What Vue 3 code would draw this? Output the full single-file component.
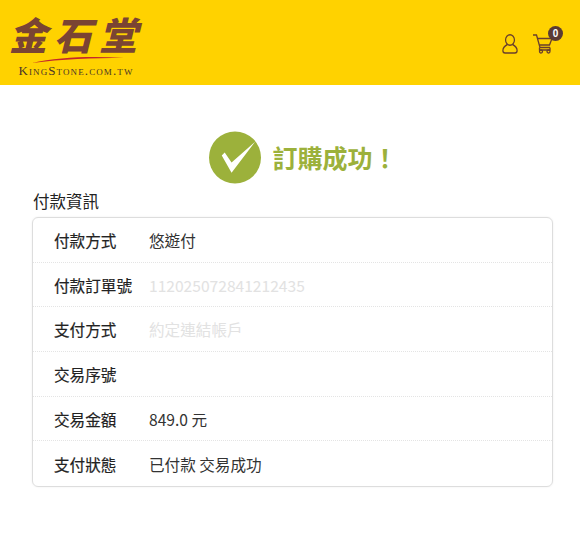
<template>
  <div class="page">
    <header class="topbar">
      <div class="logo">
        <div class="logo-name">金石堂</div>
        <svg class="swoosh" width="92" height="7" viewBox="0 0 92 7">
          <path d="M0 7C26 1 60 0 92 2C60 2 30 3 0 7Z" fill="#c4272b" />
        </svg>
        <div class="logo-url">KingStone.com.tw</div>
      </div>
      <div class="actions">
        <svg class="icon" width="16" height="20" viewBox="0 0 18 20" preserveAspectRatio="none" fill="none" stroke="#6a3f2c" stroke-width="1.4">
          <ellipse cx="9" cy="6" rx="5" ry="5.200" />
          <path d="M6 10.500C3 12 1 13.500 1 16.500C1 18 2 19 3.500 19H14.500C16 19 17 18 17 16.500C17 13.500 15 12 12 10.500" />
        </svg>
        <div class="cart">
          <svg width="20" height="20" viewBox="0 0 20 20" fill="none" stroke="#6a3f2c" stroke-width="1.3">
            <path d="M0 1H3.500L7 13.500H17" />
            <path d="M4.500 4.500H19L16.500 11H6.300" />
            <path d="M6.500 13.500V16H17V13.500" />
            <circle cx="8" cy="17.500" r="1.500" />
            <circle cx="15.500" cy="17.500" r="1.500" />
          </svg>
          <span class="badge">0</span>
        </div>
      </div>
    </header>

    <main class="content">
      <div class="success">
        <svg width="52" height="53" viewBox="0 0 53 53">
          <circle cx="26.500" cy="26.500" r="26.500" fill="#9cb13b" />
          <path d="M13 24.500L16 21.500L23 31.500L47 10.500L23 42Z" fill="#fff" />
        </svg>
        <h1>訂購成功！</h1>
      </div>

      <h2>付款資訊</h2>
      <div class="card">
        <div v-for="row in rows" :key="row.label" class="row">
          <span class="label">{{ row.label }}</span>
          <span class="value" :class="{ faint: row.faint }">{{ row.value }}</span>
        </div>
      </div>
    </main>
  </div>
</template>

<script setup>
const rows = [
  { label: '付款方式', value: '悠遊付' },
  { label: '付款訂單號', value: '112025072841212435', faint: true },
  { label: '支付方式', value: '約定連結帳戶', faint: true },
  { label: '交易序號', value: '' },
  { label: '交易金額', value: '849.0 元' },
  { label: '支付狀態', value: '已付款 交易成功' }
]
</script>

<style>
body {
  background: #fff;
}
</style>

<style scoped>
.page {
  width: 580px;
  height: 540px;
  overflow: hidden;
  font-family: "Noto Sans CJK TC", "Noto Sans", sans-serif;
  color: #333;
}

.topbar {
  height: 85px;
  background: #ffd200;
  display: flex;
  justify-content: space-between;
  align-items: center;
  padding: 0 27px 0 6px;
  box-sizing: border-box;
}

.logo {
  width: 134px;
  display: flex;
  flex-direction: column;
  align-items: center;
  margin-top: 5px;
}

.logo-name {
  font-size: 38px;
  line-height: 42px;
  font-weight: 900;
  font-style: italic;
  letter-spacing: 7px;
  margin-right: -7px;
  color: #7a4433;
  white-space: nowrap;
}

.swoosh {
  margin-top: 1px;
  margin-left: 10px;
}

.logo-url {
  font-family: "Liberation Serif", serif;
  font-variant: small-caps;
  font-size: 13px;
  line-height: 14px;
  letter-spacing: 1.1px;
  color: #4a3428;
  margin-top: 1px;
  margin-left: 6px;
  white-space: nowrap;
}

.actions {
  display: flex;
  align-items: center;
  gap: 15px;
  margin-top: 3px;
}

.icon {
  display: block;
}

.cart {
  position: relative;
  height: 20px;
}

.cart svg {
  display: block;
}

.badge {
  position: absolute;
  top: -8px;
  right: -10px;
  width: 15px;
  height: 15px;
  border-radius: 50%;
  background: #5a3b34;
  color: #fff;
  font: 700 10px/15px "Liberation Sans", sans-serif;
  text-align: center;
}

.content {
  padding: 46px 27px 0 32px;
}

.success {
  display: flex;
  justify-content: center;
  align-items: center;
  gap: 11px;
  padding-left: 22px;
}

.success h1 {
  margin: 0;
  font-size: 25px;
  line-height: 53px;
  font-weight: 700;
  color: #9cb13b;
}

h2 {
  margin: 6px 0 4px 1px;
  font-size: 16.500px;
  line-height: 23px;
  font-weight: 400;
  color: #222;
}

.card {
  border: 1px solid #ddd;
  border-radius: 6px;
  box-shadow: 0 0 2px rgba(0, 0, 0, 0.08);
}

.row {
  height: 44.700px;
  box-sizing: border-box;
  display: flex;
  align-items: center;
  padding-left: 21px;
  font-size: 15.600px;
  border-bottom: 1px dotted #e4e4e4;
}

.row:last-child {
  border-bottom: none;
}

.label {
  width: 95px;
  font-weight: 400;
  -webkit-text-stroke: 0.2px #222;
  color: #222;
}

.value {
  color: #333;
}

.faint {
  color: #e2e2e2;
}
</style>
